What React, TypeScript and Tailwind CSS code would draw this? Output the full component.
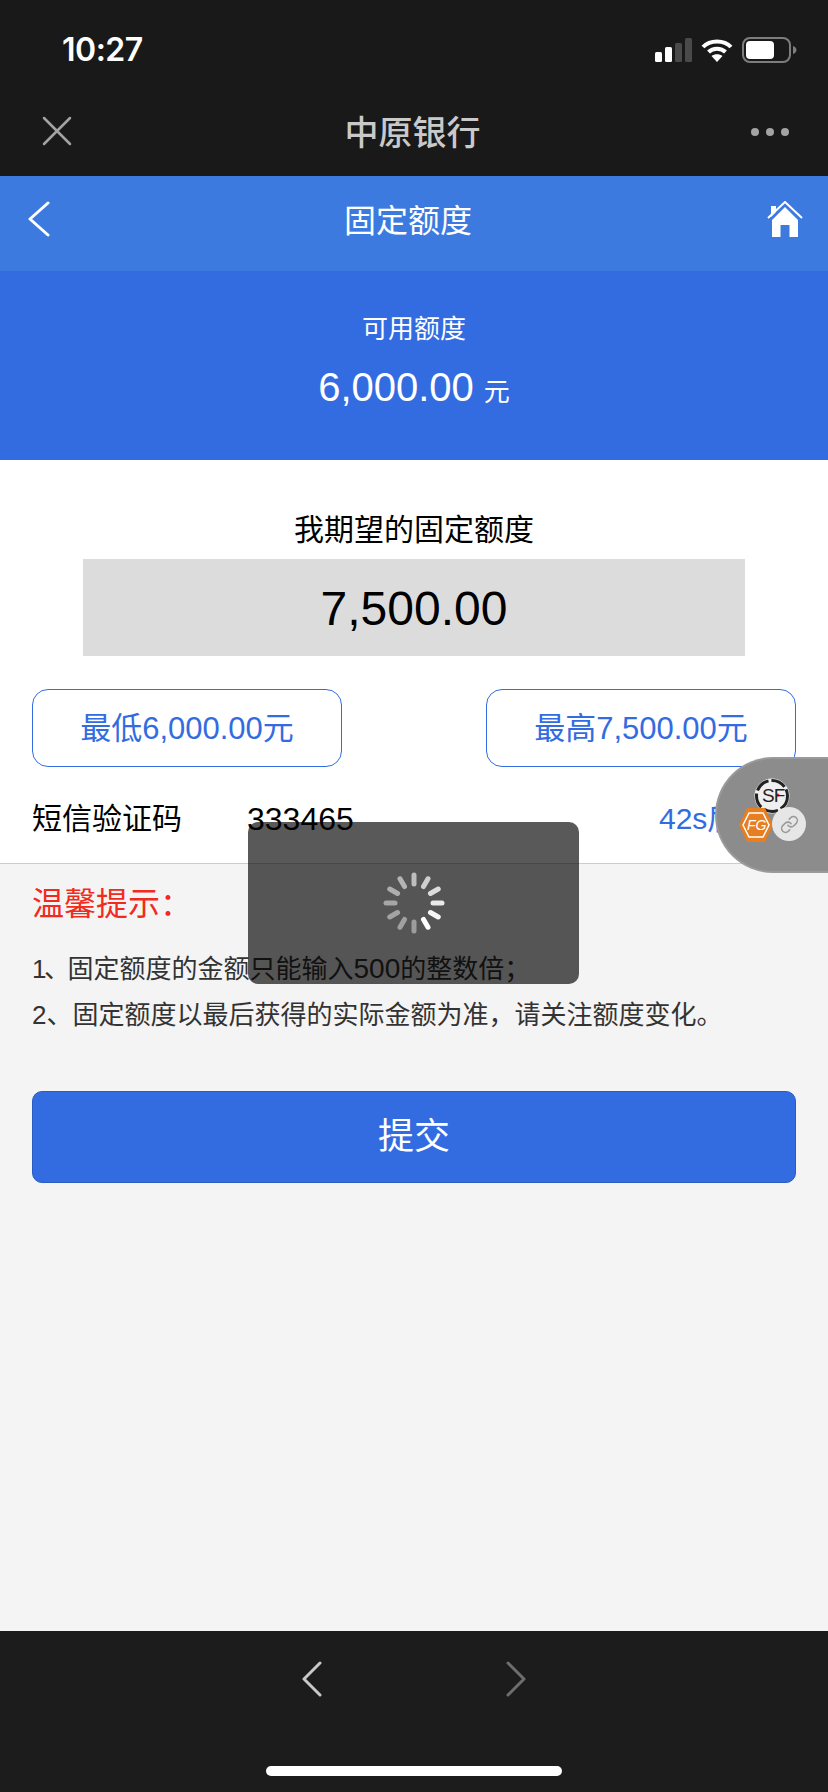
import React from 'react';
import { Link } from 'lucide-react';

const spokes = [
  { a: 0, o: 0.62 }, { a: 30, o: 0.72 }, { a: 60, o: 0.8 }, { a: 90, o: 0.88 },
  { a: 120, o: 0.95 }, { a: 150, o: 1 }, { a: 180, o: 0.42 }, { a: 210, o: 0.44 },
  { a: 240, o: 0.46 }, { a: 270, o: 0.48 }, { a: 300, o: 0.52 }, { a: 330, o: 0.56 },
];

function StatusIcons() {
  return (
    <div className="flex items-center gap-[9px]">
      <svg width="37" height="24" viewBox="0 0 37 24">
        <rect x="0" y="14" width="7" height="10" rx="1.5" fill="#fff" />
        <rect x="10" y="9" width="7" height="15" rx="1.5" fill="#fff" />
        <rect x="20" y="5" width="7" height="19" rx="1.5" fill="#4a4a4a" />
        <rect x="30" y="0" width="7" height="24" rx="1.5" fill="#4a4a4a" />
      </svg>
      <svg width="32" height="24" viewBox="0 0 32 24" fill="none" stroke="#fff" strokeWidth="4">
        <path d="M2 9 C9 1.5 23 1.5 30 9" />
        <path d="M7.5 14 C12 9.5 20 9.5 24.5 14" />
        <path d="M16 24 L10.5 18 C13.5 15.5 18.5 15.5 21.5 18 Z" fill="#fff" stroke="none" />
      </svg>
      <svg width="55" height="26" viewBox="0 0 55 26">
        <rect x="1" y="1" width="47" height="24" rx="7" fill="none" stroke="#7d7d7d" strokeWidth="2" />
        <rect x="4" y="4" width="28" height="18" rx="4" fill="#fff" />
        <path d="M51 9 C53.5 10 54.5 11.5 54.5 13 C54.5 14.5 53.5 16 51 17 Z" fill="#7d7d7d" />
      </svg>
    </div>
  );
}

function HomeIcon() {
  return (
    <svg width="36" height="36" viewBox="0 0 36 36" fill="#fff">
      <path d="M4 5 H9 V11 L4 16 Z" />
      <path d="M1 17 L18 1 L35 17" fill="none" stroke="#fff" strokeWidth="2" />
      <path d="M5 19 L18 6 L31 19 V36 H22.5 V24 H13.5 V36 H5 Z" />
    </svg>
  );
}

function FloatBall() {
  return (
    <div className="absolute right-0 top-[757px] w-[113px] h-[116px] rounded-l-[58px] bg-[#8c8c8c] border-2 border-r-0 border-[#9a9a9a]">
      <svg className="absolute left-[37px] top-[19px]" width="36" height="36" viewBox="0 0 36 36">
        <circle cx="18" cy="18" r="17.5" fill="#efefef" />
        <circle cx="18" cy="18" r="15.5" fill="none" stroke="#222" strokeWidth="3" strokeDasharray="15 3" />
        <circle cx="24" cy="17" r="1.5" fill="#e0283c" />
      </svg>
      <span className="absolute left-[45px] top-[26px] text-[19px] text-[#222] leading-[22px] tracking-[-1px]">SF</span>
      <svg className="absolute left-[21px] top-[48px]" width="36" height="36" viewBox="0 0 36 36">
        <path d="M9 1 H27 L35 18 L27 35 H9 L1 18 Z" fill="#e67e22" />
        <path d="M11 6 H25 L31 18 L25 30 H11 L5 18 Z" fill="none" stroke="#fff" strokeWidth="1.5" />
      </svg>
      <span className="absolute left-[30px] top-[55px] text-[14px] italic text-white leading-[22px]">FG</span>
      <div className="absolute left-[55px] top-[48px] w-[34px] h-[34px] rounded-full bg-[#e6e6e6] flex items-center justify-center">
        <Link size={19} color="#9a9a9a" strokeWidth={2} />
      </div>
    </div>
  );
}

function LoadingToast() {
  return (
    <div className="absolute left-[248px] top-[822px] w-[331px] h-[162px] rounded-[10px] bg-black/65 flex items-center justify-center">
      <svg width="64" height="64" viewBox="-32 -32 64 64">
        {spokes.map(s => (
          <line key={s.a} x1="0" y1="-19" x2="0" y2="-28" stroke="#fff" strokeWidth="5" strokeLinecap="round" opacity={s.o} transform={`rotate(${s.a})`} />
        ))}
      </svg>
    </div>
  );
}

export default function App() {
  return (
    <div className="relative w-[828px] h-[1792px] overflow-hidden flex flex-col bg-[#f4f4f4] [font-family:'Liberation_Sans','Noto_Sans_CJK_SC',sans-serif]">
      <div className="h-[176px] bg-[#191919] shrink-0">
        <div className="h-[100px] flex items-center justify-between pl-[62px] pr-[31px]">
          <span className="text-[32px] font-semibold tracking-[-0.5px] text-white [font-family:Inter,sans-serif]">10:27</span>
          <StatusIcons />
        </div>
        <div className="h-[76px] flex items-start justify-between pl-[42px] pr-[39px] pt-[16px]">
          <svg width="30" height="30" viewBox="0 0 30 30" stroke="#a3a3a3" strokeWidth="2.5" strokeLinecap="round">
            <path d="M2 2 L28 28 M28 2 L2 28" />
          </svg>
          <span className="text-[34px] font-medium leading-[34px] text-[#c9c9c9] ml-[2px]">中原银行</span>
          <div className="flex gap-[7px] pt-[12px]">
            <span className="w-[8px] h-[8px] rounded-full bg-[#a3a3a3]" />
            <span className="w-[8px] h-[8px] rounded-full bg-[#a3a3a3]" />
            <span className="w-[8px] h-[8px] rounded-full bg-[#a3a3a3]" />
          </div>
        </div>
      </div>

      <div className="h-[95px] shrink-0 bg-[#3d7ae0] flex items-start justify-between pl-[27px] pr-[25px] pt-[25px]">
        <svg width="24" height="36" viewBox="0 0 24 36" fill="none" stroke="#fff" strokeWidth="3" strokeLinecap="round" strokeLinejoin="round">
          <path d="M21 2 L3 18 L21 34" />
        </svg>
        <span className="text-[32px] leading-[40px] text-white mr-[2px]">固定额度</span>
        <HomeIcon />
      </div>

      <div className="h-[189px] shrink-0 bg-[#336ce0] flex flex-col items-center pt-[40px] text-white">
        <p className="text-[26px] leading-[36px]">可用额度</p>
        <p className="mt-[16px] text-[40px] leading-[48px]">6,000.00<span className="ml-[10px] text-[26px]">元</span></p>
      </div>

      <div className="h-[404px] shrink-0 bg-white border-b border-[#cccccc]">
        <p className="mt-[50px] text-center text-[30px] leading-[40px] text-black">我期望的固定额度</p>
        <div className="mx-[83px] mt-[9px] h-[97px] pt-[2px] bg-[#dcdcdc] flex items-center justify-center text-[48px] text-black">7,500.00</div>
        <div className="mt-[33px] mx-[32px] flex justify-between">
          <div className="w-[310px] h-[78px] pt-[2px] rounded-[16px] border border-[#336ce0] flex items-center justify-center text-[31px] text-[#336ce0]">最低6,000.00元</div>
          <div className="w-[310px] h-[78px] pt-[2px] rounded-[16px] border border-[#336ce0] flex items-center justify-center text-[31px] text-[#336ce0]">最高7,500.00元</div>
        </div>
        <div className="mt-[32px] pl-[32px] flex items-center text-[30px] leading-[40px] text-black">
          <span className="w-[215px]">短信验证码</span>
          <span className="w-[412px] text-[32px]">333465</span>
          <span className="text-[#336ce0] whitespace-nowrap">42s后</span>
        </div>
      </div>

      <div className="flex-1 px-[32px]">
        <p className="mt-[20px] text-[32px] leading-[40px] text-[#f02b1d]">温馨提示：</p>
        <p className="mt-[22px] text-[26px] leading-[46px] text-[#333333]"><span className="tracking-[-2.5px]">1、</span>固定额度的金额只能输入<span className="text-[28px]">500</span>的整数倍；</p>
        <p className="text-[26px] leading-[46px] text-[#333333]">2、固定额度以最后获得的实际金额为准，请关注额度变化。</p>
        <button className="mt-[53px] w-full h-[92px] rounded-[10px] bg-[#336ce0] border border-[#2a5cc4] text-[36px] text-white">提交</button>
      </div>

      <div className="h-[161px] shrink-0 bg-[#1c1c1c] flex flex-col items-center">
        <div className="mt-[30px] flex gap-[184px]">
          <svg width="20" height="36" viewBox="0 0 20 36" fill="none" stroke="#c8c8c8" strokeWidth="3" strokeLinecap="round" strokeLinejoin="round">
            <path d="M18 2 L2 18 L18 34" />
          </svg>
          <svg width="20" height="36" viewBox="0 0 20 36" fill="none" stroke="#6e6e6e" strokeWidth="3" strokeLinecap="round" strokeLinejoin="round">
            <path d="M2 2 L18 18 L2 34" />
          </svg>
        </div>
        <div className="mt-[69px] w-[296px] h-[10px] rounded-full bg-white" />
      </div>

      <LoadingToast />
      <FloatBall />
    </div>
  );
}
